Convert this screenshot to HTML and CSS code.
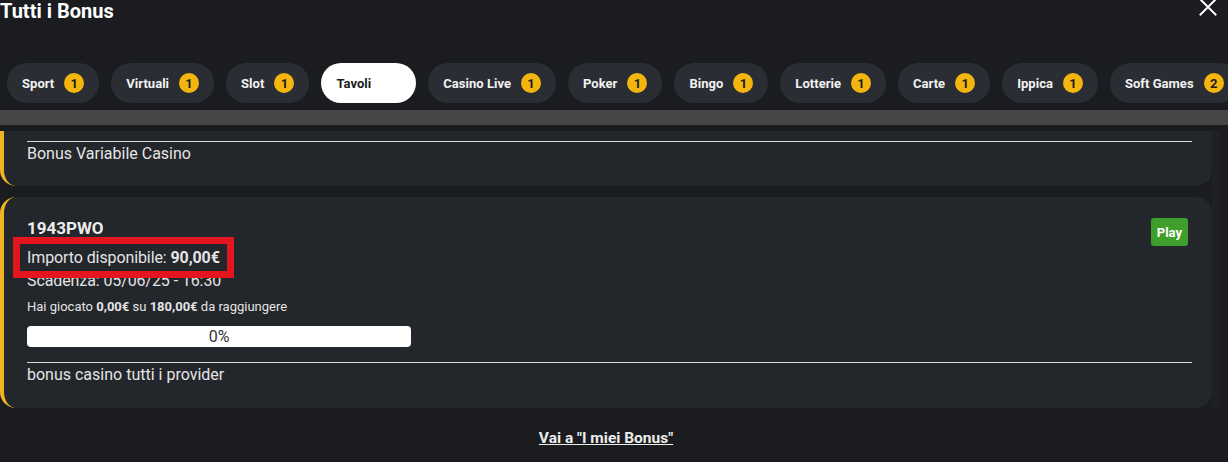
FILE: index.html
```html
<!DOCTYPE html>
<html lang="it">
<head>
<meta charset="utf-8">
<title>Tutti i Bonus</title>
<link rel="stylesheet" href="styles.css">
</head>
<body>
<div class="modal">
  <header class="modal-head">
    <h1 class="modal-title">Tutti i Bonus</h1>
    <button class="close-btn" aria-label="Chiudi">
      <svg width="18" height="18" viewBox="0 0 18 18"><path d="M1.5 1.5 L16.5 16.5 M16.5 1.5 L1.5 16.5" stroke="#fff" stroke-width="2" stroke-linecap="square" fill="none"/></svg>
    </button>
  </header>

  <nav class="tabs">
    <div class="tab">Sport <span class="badge">1</span></div>
    <div class="tab">Virtuali <span class="badge">1</span></div>
    <div class="tab">Slot <span class="badge">1</span></div>
    <div class="tab tab--active">Tavoli <span class="badge badge--hidden">1</span></div>
    <div class="tab">Casino Live <span class="badge">1</span></div>
    <div class="tab">Poker <span class="badge">1</span></div>
    <div class="tab">Bingo <span class="badge">1</span></div>
    <div class="tab">Lotterie <span class="badge">1</span></div>
    <div class="tab">Carte <span class="badge">1</span></div>
    <div class="tab">Ippica <span class="badge">1</span></div>
    <div class="tab">Soft Games <span class="badge">2</span></div>
  </nav>
  <div class="hscroll"></div>

  <div class="scroll-area">
    <div class="list">
      <section class="card card--clipped">
        <hr class="rule">
        <p class="desc">Bonus Variabile Casino</p>
      </section>

      <section class="card">
        <div class="card-head">
          <h2 class="code">1943PWO</h2>
          <button class="play">Play</button>
        </div>
        <p class="line">Importo disponibile: <b>90,00€</b></p>
        <p class="line">Scadenza: 05/06/25 - 16:30</p>
        <p class="played">Hai giocato <b>0,00€</b> su <b>180,00€</b> da raggiungere</p>
        <div class="progress"><span>0%</span></div>
        <hr class="rule">
        <p class="desc">bonus casino tutti i provider</p>
        <div class="highlight"></div>
      </section>

      <div class="footer">
        <a class="my-bonus" href="#">Vai a "I miei Bonus"</a>
      </div>
    </div>
    <div class="vscroll"><div class="thumb"></div></div>
  </div>
</div>
</body>
</html>
```

FILE: styles.css
```css
* { box-sizing: border-box; }

html, body {
  margin: 0;
  height: 100%;
}

body {
  background: #1a1c20;
  color: #e4e4e4;
  font-family: Roboto, "Liberation Sans", Arial, sans-serif;
  overflow: hidden;
}

.modal {
  width: 1228px;
  height: 462px;
  overflow: hidden;
}

/* header */
.modal-head {
  height: 63px;
  display: flex;
  justify-content: space-between;
  align-items: flex-start;
  padding-right: 11px;
}

.modal-title {
  margin: 0;
  font-size: 20px;
  line-height: 23px;
  font-weight: 700;
  color: #fff;
}

.close-btn {
  border: 0;
  padding: 0;
  background: none;
  margin-top: -2px;
  display: block;
}
.close-btn svg { display: block; }

/* category tabs */
.tabs {
  display: flex;
  gap: 12px;
  padding: 0 0 7px 7px;
  overflow: hidden;
  white-space: nowrap;
}

.tab {
  flex: none;
  height: 40px;
  display: flex;
  align-items: center;
  gap: 10px;
  padding: 0 15px;
  border-radius: 20px;
  background: #2a2d33;
  color: #f2f2f2;
  font-size: 13px;
  font-weight: 700;
  letter-spacing: 0.03px;
}

.tab--active {
  background: #fff;
  color: #1a1c20;
}

.badge {
  width: 20px;
  height: 20px;
  border-radius: 50%;
  background: #f5b50f;
  color: #1a1c20;
  display: flex;
  align-items: center;
  justify-content: center;
  font-size: 13px;
  font-weight: 700;
  letter-spacing: 0;
}

.badge--hidden { visibility: hidden; }

.hscroll {
  height: 15px;
  background: #464646;
}

/* bonus list */
.scroll-area {
  margin-top: 6px;
  display: flex;
  height: 331px;
}

.list {
  width: 1212px;
  display: flex;
  flex-direction: column;
  gap: 11px;
}

.vscroll {
  width: 16px;
}

.thumb {
  width: 8px;
  height: 279px;
  background: #1e2024;
}

.card {
  position: relative;
  background: #23262b;
  border-left: 4px solid #f0b323;
  border-radius: 16px;
  padding: 21px 20px 22px 23px;
}

.card--clipped {
  border-top-left-radius: 0;
  border-top-right-radius: 0;
  padding-top: 10px;
  padding-bottom: 21px;
}

.rule {
  margin: 0;
  border: 0;
  height: 1px;
  background: #d8d8d8;
}

.desc {
  margin: 0;
  font-size: 16px;
  line-height: 23px;
}

.card-head {
  display: flex;
  justify-content: space-between;
  align-items: flex-start;
}

.code {
  margin: 0;
  font-size: 17px;
  line-height: 20px;
  font-weight: 700;
  color: #ececec;
}

.play {
  height: 28px;
  margin-right: 4px;
  padding: 0 6px;
  border: 0;
  border-radius: 3px;
  background: #3f9f2b;
  color: #fff;
  font-family: inherit;
  font-size: 13px;
  font-weight: 700;
}

.line {
  margin: 0;
  font-size: 16px;
  line-height: 23px;
  letter-spacing: -0.1px;
}

.played {
  margin: 4px 0 0;
  font-size: 13px;
  line-height: 22px;
}

.progress {
  width: 384px;
  height: 21px;
  margin: 8px 0 15px;
  border-radius: 4px;
  background: #fff;
  color: #333;
  font-size: 16px;
  line-height: 21px;
  text-align: center;
}

/* annotation frame drawn over the amount line */
.highlight {
  position: absolute;
  left: 9px;
  top: 40px;
  width: 221px;
  height: 41px;
  border: 7px solid #e3161f;
}

.footer {
  padding-top: 9px;
  text-align: center;
}

.my-bonus {
  color: #ececec;
  font-size: 15.5px;
  line-height: 20px;
  font-weight: 700;
  text-decoration: underline;
}
```
